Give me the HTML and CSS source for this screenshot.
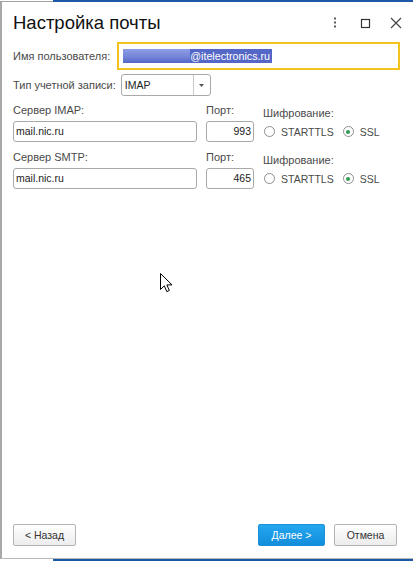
FILE: index.html
```html
<!DOCTYPE html>
<html lang="ru">
<head>
<meta charset="utf-8">
<title>Настройка почты</title>
<link rel="stylesheet" href="styles.css">
</head>
<body>
<div class="strip strip-top"><span class="strip-gap"></span><span class="strip-blue"></span></div>
<div class="dialog">
  <div class="header">
    <h1 class="title">Настройка почты</h1>
    <div class="win-icons">
      <svg class="ico-kebab" width="4" height="12" viewBox="0 0 4 12"><rect x="1" y="0.5" width="2" height="2" fill="#5a5a5a"/><rect x="1" y="4.5" width="2" height="2" fill="#5a5a5a"/><rect x="1" y="8.5" width="2" height="2" fill="#5a5a5a"/></svg>
      <svg class="ico-max" width="11" height="11" viewBox="0 0 11 11"><rect x="1.5" y="1.5" width="8" height="8" fill="none" stroke="#333" stroke-width="1.2"/></svg>
      <svg class="ico-close" width="12" height="12" viewBox="0 0 12 12"><path d="M1 1 L11 11 M11 1 L1 11" stroke="#444" stroke-width="1.2" fill="none"/></svg>
    </div>
  </div>

  <div class="row row-user">
    <span class="label">Имя пользователя:</span>
    <div class="field-focus"><span class="sel"><span class="redact"></span><span class="sel-text">@itelectronics.ru</span></span></div>
  </div>

  <div class="row row-type">
    <span class="label">Тип учетной записи:</span>
    <div class="combo"><span class="combo-text">IMAP</span><span class="combo-btn"><svg width="5" height="3" viewBox="0 0 5 3"><path d="M0 0 H5 L2.5 3 Z" fill="#555"/></svg></span></div>
  </div>

  <div class="server">
    <span class="label">Сервер IMAP:</span>
    <span class="label">Порт:</span>
    <span class="label label-enc">Шифрование:</span>
    <div class="input">mail.nic.ru</div>
    <div class="input input-port">993</div>
    <div class="radios">
      <span class="radio"></span><span class="radio-text">STARTTLS</span>
      <span class="radio radio-on"></span><span class="radio-text">SSL</span>
    </div>
  </div>

  <div class="server server-2">
    <span class="label">Сервер SMTP:</span>
    <span class="label">Порт:</span>
    <span class="label label-enc">Шифрование:</span>
    <div class="input">mail.nic.ru</div>
    <div class="input input-port">465</div>
    <div class="radios">
      <span class="radio"></span><span class="radio-text">STARTTLS</span>
      <span class="radio radio-on"></span><span class="radio-text">SSL</span>
    </div>
  </div>

  <div class="spacer"></div>

  <div class="footer">
    <button class="btn btn-back">&lt; Назад</button>
    <span class="footer-gap"></span>
    <button class="btn btn-primary">Далее &gt;</button>
    <button class="btn btn-cancel">Отмена</button>
  </div>
</div>
<div class="strip strip-bottom"><span class="strip-gap"></span><span class="strip-blue"></span></div>

<svg class="cursor" width="13" height="20" viewBox="0 0 13 20"><path d="M0.5 0.5 L0.5 16.5 L4.3 12.8 L6.8 18.6 L9.3 17.5 L6.9 11.9 L12 11.9 Z" fill="#fff" stroke="#000" stroke-width="1" stroke-linejoin="miter"/></svg>
</body>
</html>
```

FILE: styles.css
```css
* { box-sizing: border-box; }
html, body { margin: 0; padding: 0; }
body {
  width: 413px;
  height: 561px;
  overflow: hidden;
  background: #fff;
  font-family: "Liberation Sans", Arial, sans-serif;
  font-size: 10.5px;
  color: #4a4a4a;
  position: relative;
}
.strip { display: flex; height: 2px; }
.strip-gap { width: 53px; }
.strip-top .strip-gap { border-bottom: 1px solid #a3a3a3; }
.strip-blue { flex: 1; background: #1d58a6; }
.dialog {
  height: 557px;
  border-left: 2px solid #a8a8a8;
  border-bottom: 1px solid #b8b8b8;
  display: flex;
  flex-direction: column;
  padding: 0 13px 0 11px;
}
.header {
  display: flex;
  align-items: center;
  padding-top: 10px;
  margin-right: -2px;
}
.title {
  flex: 1;
  margin: 0;
  font-weight: normal;
  font-size: 18.5px;
  line-height: 22px;
  color: #111;
}
.win-icons { display: flex; align-items: center; }
.ico-kebab { margin-right: 23px; }
.ico-max { margin-right: 19px; }
.label { font-size: 11px; line-height: 13px; white-space: nowrap; }
.row { display: flex; align-items: center; gap: 5px; }
.row-user { margin-top: 8px; gap: 7px; }
.field-focus {
  flex: 1;
  height: 28px;
  border: 2px solid #f3c31c;
  display: flex;
  align-items: center;
  padding-left: 4px;
}
.sel {
  display: flex;
  align-items: center;
  height: 14px;
  background: #5467c6;
  color: #fff;
  font-size: 10.7px;
  padding-right: 2px;
}
.redact {
  width: 67px;
  height: 14px;
  background: linear-gradient(#8d9de4 0%, #7585d8 55%, #5467c6 100%);
}
.sel-text { line-height: 14px; }
.row-type { margin-top: 4px; }
.combo {
  width: 90px;
  height: 22px;
  border: 1px solid #a9a9a9;
  border-radius: 3px;
  display: flex;
  color: #222;
}
.combo-text { flex: 1; padding-left: 3px; line-height: 20px; }
.combo-btn {
  width: 17px;
  border-left: 1px solid #c8c8c8;
  display: flex;
  align-items: center;
  justify-content: center;
}
.server {
  display: grid;
  grid-template-columns: 184px 48px 1fr;
  column-gap: 9px;
  row-gap: 4px;
  margin-top: 8px;
}
.server-2 { margin-top: 9px; }
.label-enc { margin-top: 3px; margin-bottom: -3px; }
.input {
  height: 21px;
  border: 1px solid #a9a9a9;
  border-radius: 3px;
  padding: 0 2px;
  line-height: 19px;
  color: #222;
}
.input-port { text-align: right; }
.radios { display: flex; align-items: center; padding-left: 1px; }
.radio {
  width: 11px;
  height: 11px;
  border: 1px solid #8e8e8e;
  border-radius: 50%;
  background: #fff;
  display: flex;
  align-items: center;
  justify-content: center;
}
.radio-on::after {
  content: "";
  width: 4px;
  height: 4px;
  border-radius: 50%;
  background: #2f9a52;
}
.radio-text { margin-left: 6px; margin-right: 9px; color: #4a4a4a; }
.spacer { flex: 1; }
.footer {
  display: flex;
  align-items: center;
  padding-bottom: 12px;
  margin-right: 3px;
}
.footer-gap { flex: 1; }
.btn {
  height: 22px;
  font-family: "Liberation Sans", Arial, sans-serif;
  font-size: 10.5px;
  border-radius: 2px;
  padding: 0;
  cursor: default;
}
.btn-back, .btn-cancel {
  width: 63px;
  border: 1px solid #b3b3b3;
  background: linear-gradient(#ffffff, #ececec);
  color: #333;
}
.btn-primary {
  width: 67px;
  border: 1px solid #1a8fdc;
  background: linear-gradient(#25a7ef, #138ddb);
  color: #fff;
  margin-right: 9px;
}
.cursor { position: absolute; left: 160px; top: 273px; }
```
